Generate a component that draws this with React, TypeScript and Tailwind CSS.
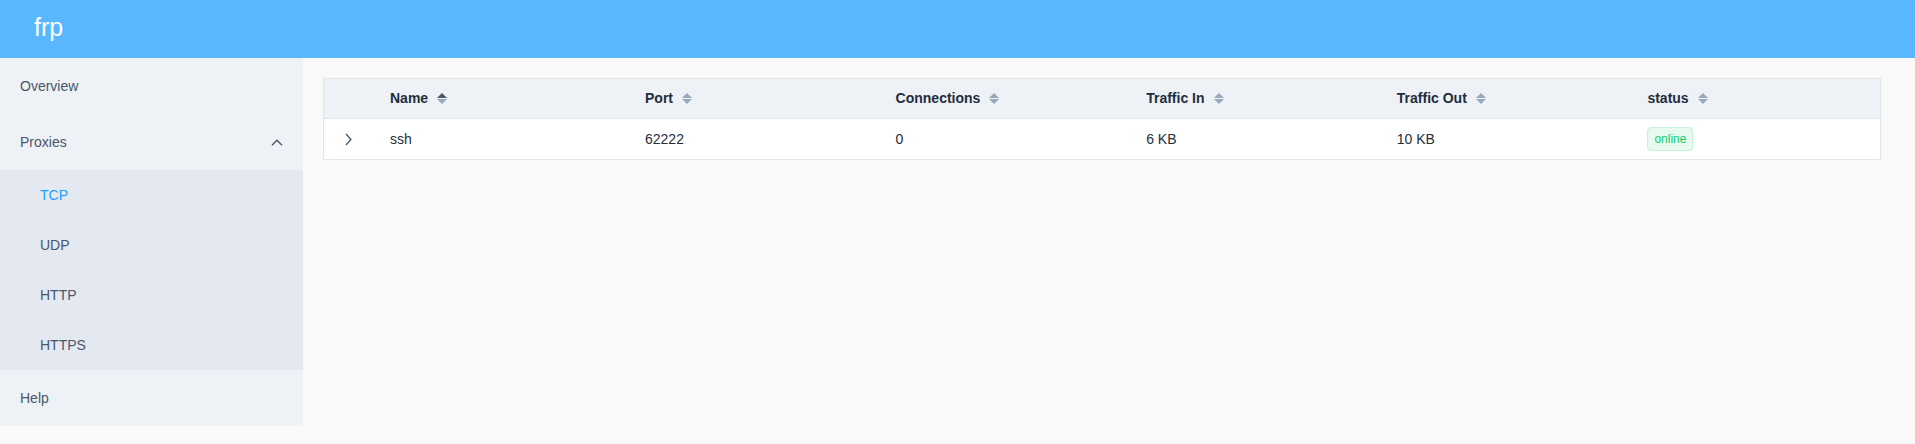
const menuItem = "flex h-14 items-center px-5";
const subItem = "flex h-[50px] items-center pl-10";

const columns = ["Name", "Port", "Connections", "Traffic In", "Traffic Out", "status"];

const proxies = [
  { name: "ssh", port: "62222", conns: "0", trafficIn: "6 KB", trafficOut: "10 KB", status: "online" },
];

function SortCaret({ active }: { active?: boolean }) {
  return (
    <span className="ml-[9px] inline-flex flex-col items-center gap-px">
      <span
        className={
          "h-0 w-0 border-x-[5px] border-b-[5px] border-x-transparent " +
          (active ? "border-b-[#48576a]" : "border-b-[#97a8be]")
        }
      />
      <span className="h-0 w-0 border-x-[5px] border-t-[5px] border-x-transparent border-t-[#97a8be]" />
    </span>
  );
}

export default function App() {
  return (
    <div className="min-h-screen bg-[#f9f9f9] font-['Liberation_Sans',Arial,sans-serif]">
      {/* Top bar */}
      <header className="h-[58px] bg-[#58b7ff] pl-[34px] text-[25px] leading-[54px] text-white">frp</header>

      <div className="flex items-start">
        {/* Side menu */}
        <aside className="w-[303px] shrink-0 bg-[#eef1f6] text-[14px] text-[#48576a]">
          <div className={menuItem}>Overview</div>
          <div className={menuItem + " justify-between"}>
            <span>Proxies</span>
            <svg width="12" height="7" viewBox="0 0 12 7" fill="none" stroke="#48576a" strokeWidth="1.4">
              <path d="M1 6.2 6 1.2 11 6.2" />
            </svg>
          </div>
          <div className="bg-[#e4e8f1]">
            <div className={subItem + " text-[#20a0ff]"}>TCP</div>
            <div className={subItem}>UDP</div>
            <div className={subItem}>HTTP</div>
            <div className={subItem}>HTTPS</div>
          </div>
          <div className={menuItem}>Help</div>
        </aside>

        {/* Proxy table */}
        <main className="flex-1 pl-5 pr-[34px] pt-5">
          <div className="border border-[#dfe6ec] bg-white text-[14px] text-[#1f2d3d]">
            <div className="grid h-10 grid-cols-[48px_255px_repeat(5,1fr)] border-b border-[#dfe6ec] bg-[#eef1f6] font-bold">
              <div />
              {columns.map((c, i) => (
                <div key={c} className="flex items-center px-[18px]">
                  {c}
                  <SortCaret active={i === 0} />
                </div>
              ))}
            </div>
            {proxies.map((p) => (
              <div key={p.name} className="grid h-10 grid-cols-[48px_255px_repeat(5,1fr)] items-center">
                <div className="flex justify-center">
                  <svg width="7" height="13" viewBox="0 0 7 13" fill="none" stroke="#48576a" strokeWidth="1.3">
                    <path d="M1 1 6 6.5 1 12" />
                  </svg>
                </div>
                <div className="px-[18px]">{p.name}</div>
                <div className="px-[18px]">{p.port}</div>
                <div className="px-[18px]">{p.conns}</div>
                <div className="px-[18px]">{p.trafficIn}</div>
                <div className="px-[18px]">{p.trafficOut}</div>
                <div className="px-[18px]">
                  <span className="inline-block h-6 rounded border border-[#c4f3d9] bg-[#e7faf0] px-[6px] text-[12px] leading-[22px] text-[#13ce66]">
                    {p.status}
                  </span>
                </div>
              </div>
            ))}
          </div>
        </main>
      </div>
    </div>
  );
}
